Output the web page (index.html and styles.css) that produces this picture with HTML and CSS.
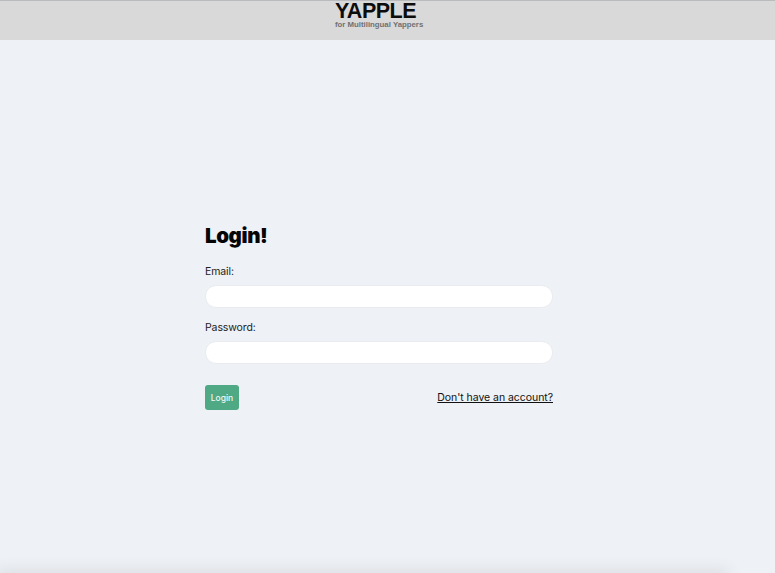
FILE: index.html
```html
<!DOCTYPE html>
<html lang="en">
<head>
    <meta charset="UTF-8">
    <meta name="viewport" content="width=device-width, initial-scale=1.0">
    <title>Yapple - Login</title>
    <link rel="stylesheet" href="styles.css">
</head>
<body>
    <!-- Header with logo -->
    <header class="top">
        <div class="logo">
            <div class="logo-name">YAPPLE</div>
            <div class="logo-tag">for Multilingual Yappers</div>
        </div>
    </header>

    <main class="content">
        <form class="login-form">
            <h1 class="heading">Login!</h1>
            <label for="email">Email:</label>
            <input type="email" id="email">
            <label for="password">Password:</label>
            <input type="password" id="password">
            <div class="actions">
                <button type="submit" class="btn-login">Login</button>
                <a href="#" class="signup-link">Don't have an account?</a>
            </div>
        </form>
    </main>

    <div class="bottom-shade"></div>
</body>
</html>
```

FILE: styles.css
```css
* {
    box-sizing: border-box;
    margin: 0;
    padding: 0;
}

html, body {
    height: 100%;
    overflow: hidden;
}

body {
    position: relative;
    display: flex;
    flex-direction: column;
    background-color: #eef1f6;
    font-family: 'Inter', 'Liberation Sans', sans-serif;
    color: #111;
}

.top {
    height: 40px;
    flex-shrink: 0;
    padding-right: 17px;
    background-color: #d9d9d9;
    border-top: 1px solid #b9bcbf;
    display: flex;
    justify-content: center;
}

.logo {
    width: 88px;
    padding-top: 3px;
}

.logo-name {
    font-family: 'Liberation Sans', sans-serif;
    font-size: 21.5px;
    font-weight: bold;
    letter-spacing: -0.5px;
    line-height: 15px;
    margin-bottom: 2px;
    color: #0c0c0c;
}

.logo-tag {
    font-family: 'Liberation Sans', sans-serif;
    font-size: 7.8px;
    font-weight: bold;
    line-height: 8px;
    color: #6f7072;
    white-space: nowrap;
}

.content {
    padding: 182px 17px 0 0;
    display: flex;
    justify-content: center;
}

.login-form {
    width: 348px;
    display: flex;
    flex-direction: column;
}

.heading {
    font-size: 20.5px;
    font-weight: 900;
    letter-spacing: -0.4px;
    line-height: 28px;
    color: #050505;
    margin-bottom: 14px;
}

label {
    font-size: 10.5px;
    letter-spacing: -0.1px;
    line-height: 16px;
    color: #222;
    margin-bottom: 5px;
}

input {
    height: 23px;
    background-color: #fff;
    border: 1px solid #e9ebef;
    border-radius: 11px;
    margin-bottom: 12px;
}

.actions {
    display: flex;
    justify-content: space-between;
    align-items: center;
    margin-top: 9px;
}

.btn-login {
    width: 34px;
    height: 25px;
    background-color: #4fa984;
    color: #f2f7f4;
    border: none;
    border-radius: 3px;
    font-family: inherit;
    font-size: 8.5px;
    font-weight: 500;
}

.signup-link {
    font-size: 10.5px;
    letter-spacing: -0.05px;
    color: #111;
}

/* soft shadow along the bottom edge */
.bottom-shade {
    position: absolute;
    left: 0;
    right: 50px;
    bottom: -6px;
    height: 6px;
    box-shadow: 0 0 14px 3px #d9dcdf;
}
```
